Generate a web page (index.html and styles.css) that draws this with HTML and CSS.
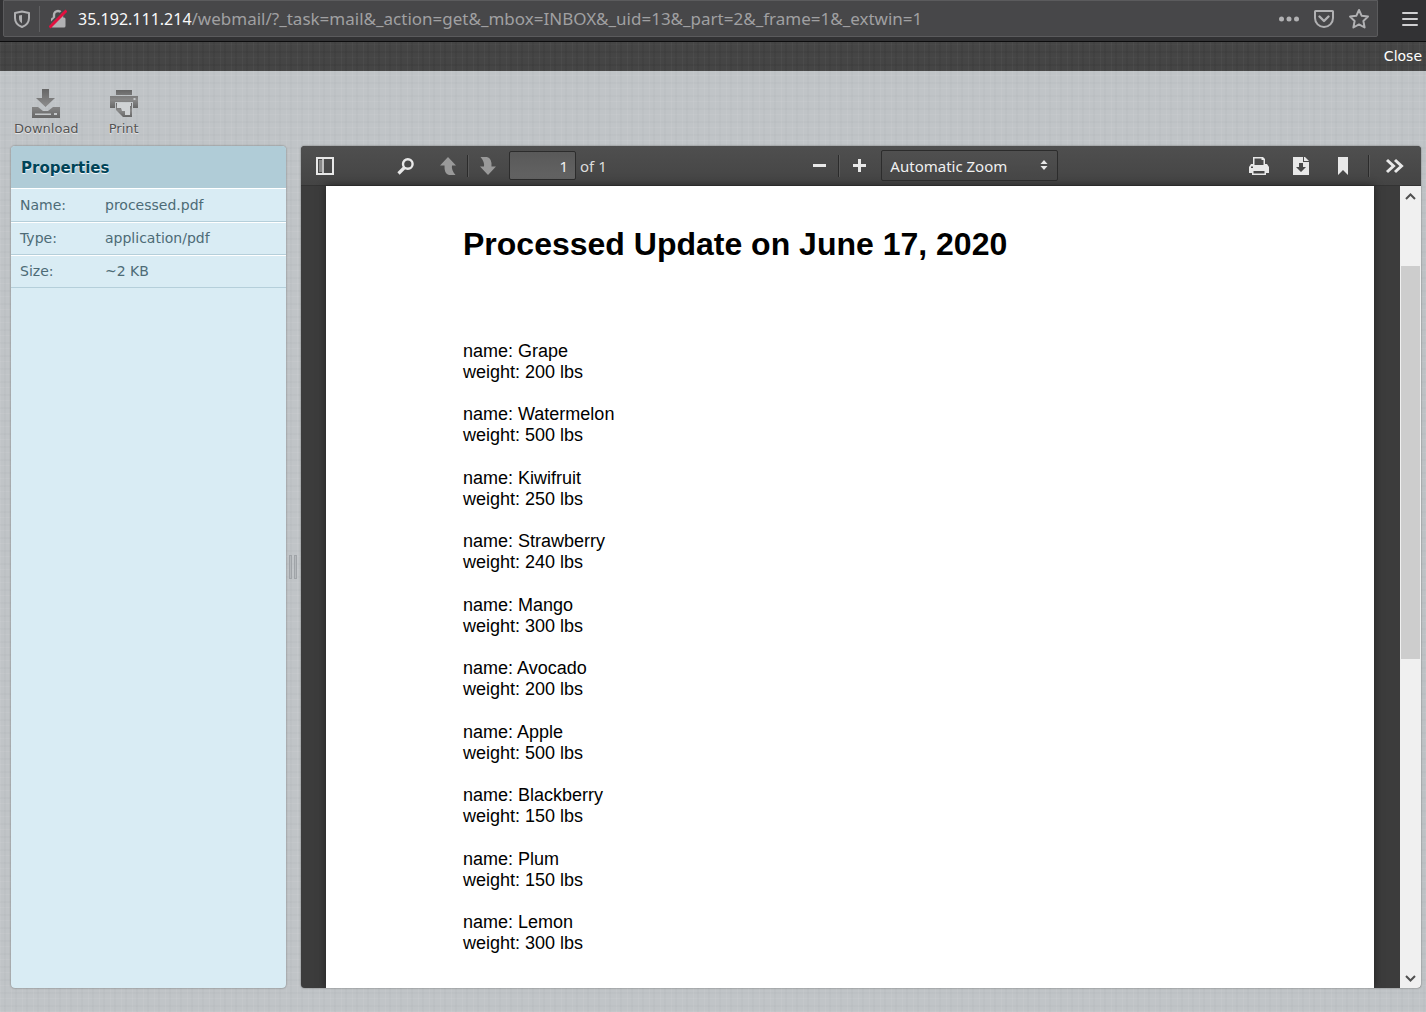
FILE: index.html
```
<!DOCTYPE html>
<html lang="en">
<head>
<meta charset="utf-8">
<title>processed.pdf</title>
<link rel="stylesheet" href="styles.css">
</head>
<body>
<header class="browser">
  <div class="address">
    <button class="chrome-btn" aria-label="Tracking protection"><svg width="18" height="18" viewBox="0 0 18 18" fill="none" stroke="#b1b1b3" stroke-width="2"><path d="M9 1.500 16 3v5c0 4-3 7.500-7 9C5 15.500 2 12 2 8V3z" stroke-linejoin="round"/><path d="M9 5v8.500C7 12 6 10.500 6 8V5.600z" fill="#b1b1b3" stroke="none"/></svg></button>
    <span class="address-rule"></span>
    <button class="chrome-btn lock" aria-label="Connection is not secure"><svg width="18" height="20" viewBox="0 0 18 20"><path d="M5 9V6a4 4 0 0 1 8 0v3" fill="none" stroke="#b1b1b3" stroke-width="2.400"/><rect x="2" y="8.500" width="14.500" height="10" rx="1.500" fill="#b1b1b3"/><path d="M-1 17 16 0" stroke="#474749" stroke-width="2"/><path d="M.5 18.500 17.500 1.500" stroke="#e2103f" stroke-width="3"/></svg></button>
    <label class="host" for="url">35.192.111.214</label>
    <input class="path" id="url" type="text" value="/webmail/?_task=mail&amp;_action=get&amp;_mbox=INBOX&amp;_uid=13&amp;_part=2&amp;_frame=1&amp;_extwin=1">
    <div class="address-actions">
      <button class="chrome-btn" aria-label="Page actions"><svg width="22" height="22" viewBox="0 0 22 22" fill="#b1b1b3"><circle cx="3.500" cy="11" r="2.500"/><circle cx="11" cy="11" r="2.500"/><circle cx="18.500" cy="11" r="2.500"/></svg></button>
      <button class="chrome-btn" aria-label="Save to Pocket"><svg width="22" height="22" viewBox="0 0 22 22" fill="none" stroke="#b1b1b3" stroke-width="2" stroke-linecap="round" stroke-linejoin="round"><path d="M2.500 3h17q.500 0 .500.500V10a9 9 0 0 1-18 0V3.500q0-.500.500-.500z"/><path d="m6.500 8.500 4.500 4.500 4.500-4.500" stroke-width="2.400"/></svg></button>
      <button class="chrome-btn" aria-label="Bookmark this page"><svg width="22" height="22" viewBox="0 0 22 22" fill="none" stroke="#b1b1b3" stroke-width="2" stroke-linejoin="round"><path d="m11 2 2.700 5.800 6.300.800-4.600 4.400 1.200 6.500L11 16.400l-5.600 3.100L6.600 13 2 8.600l6.300-.8z"/></svg></button>
    </div>
  </div>
  <button class="chrome-btn menu" aria-label="Open menu"><svg width="16" height="18" viewBox="0 0 16 18" stroke="#d0d0d2" stroke-width="2" stroke-linecap="round"><path d="M1 3h14M1 9h14M1 15h14"/></svg></button>
</header>
<nav class="topline"><a href="#">Close</a></nav>
<div class="taskbar">
  <a class="task" href="#"><svg width="30" height="30" viewBox="0 0 30 30"><defs><linearGradient id="grey" x2="0" y2="1"><stop offset="0" stop-color="#666"/><stop offset=".55" stop-color="#898989"/><stop offset="1" stop-color="#666"/></linearGradient></defs><path d="M11 0h7v9h6l-9.500 9L5 9h6zM1 18h6l5 4h5l5-4h7v11H1z" fill="url(#grey)"/><path d="M4 24.500h16v1.500H4zM23 24h3v2h-3z" fill="#c4c7c9"/></svg>Download</a>
  <a class="task" href="#"><svg width="30" height="30" viewBox="0 0 30 30" fill="url(#grey)"><path d="M7 1h16v5H7zM1 7h28v12h-5v-6H6v6H1z"/><path d="M7 14h16v14h-9l-7-7z"/><path d="M8 13.500h14V17h-1v9h-5v-4h-3l-1-3H8z" fill="#d0d3d5"/><path d="M24.500 9h2v2h-2z" fill="#c4c7c9"/></svg>Print</a>
</div>
<main class="workspace">
  <section class="properties">
    <h2>Properties</h2>
    <table>
      <tr><th scope="row">Name:</th><td>processed.pdf</td></tr>
      <tr><th scope="row">Type:</th><td>application/pdf</td></tr>
      <tr><th scope="row">Size:</th><td>~2 KB</td></tr>
    </table>
  </section>
  <div class="splitter"><span></span><span></span></div>
  <section class="viewer">
    <div class="viewer-bar">
      <div class="bar-group bar-left">
        <button class="tool" aria-label="Toggle sidebar"><svg width="18" height="18" viewBox="0 0 18 18"><path d="M1 1h16v16H1z" fill="none" stroke="#e8e8e8" stroke-width="2"/><path d="M3 3h3v12H3z" fill="#888"/><path d="M7 2v14" stroke="#e8e8e8" stroke-width="1.500"/></svg></button>
        <button class="tool find" aria-label="Find"><svg width="18" height="18" viewBox="0 0 18 18" fill="none" stroke="#e8e8e8"><circle cx="10.800" cy="7" r="4.800" stroke-width="2.400"/><path d="m7.500 10.500-6 6" stroke-width="3.200"/></svg></button>
        <div class="paging">
          <button class="tool" aria-label="Previous page" disabled><svg width="18" height="20" viewBox="0 0 18 20" fill="#999"><path d="M9 1 17 9.500h-4c-.500 3 .500 6 3.500 9.500H10q-5-1-4.500-9.500H1z"/></svg></button>
          <span class="bar-rule"></span>
          <button class="tool" aria-label="Next page" disabled><svg width="18" height="20" viewBox="0 0 18 20" fill="#999"><path d="M9 19 1 10.500h4c.500-3-.500-6-3.500-9.500H8q5 1 4.500 9.500H17z"/></svg></button>
        </div>
        <input class="page-number" id="page" type="text" value="1"><label class="page-count" for="page">of 1</label>
      </div>
      <div class="bar-group bar-middle">
        <button class="tool" aria-label="Zoom out"><svg width="14" height="14" viewBox="0 0 14 14" stroke="#e8e8e8" stroke-width="3"><path d="M1 6.500h13"/></svg></button>
        <span class="bar-rule"></span>
        <button class="tool" aria-label="Zoom in"><svg width="14" height="14" viewBox="0 0 14 14" stroke="#e8e8e8" stroke-width="3"><path d="M1 6.500h13M7.500 0v13"/></svg></button>
        <div class="zoom">
          <select aria-label="Zoom"><option>Automatic Zoom</option></select>
          <svg class="zoom-arrows" width="8" height="12" viewBox="0 0 8 12" fill="#e8e8e8"><path d="M4 1 7.500 5h-7zM4 11 .5 7h7z"/></svg>
        </div>
      </div>
      <div class="bar-group bar-right">
        <button class="tool" aria-label="Print"><svg width="22" height="20" viewBox="0 0 22 20" fill="#e8e8e8"><path fill-rule="evenodd" d="M5 1h10l2 2v5h2l2 3v6h-3v2H4v-2H1v-6l2-3h2zm1.500 1.500V9h9V4h-2V2.500zM5.500 15v2.500h11V15zM3 10.500V12h2v-1.500z"/></svg></button>
        <button class="tool" aria-label="Download"><svg width="18" height="20" viewBox="0 0 18 20" fill="#e8e8e8"><path fill-rule="evenodd" d="M1 1h10v5h6v13H1zm6 6v4H4l5 5 5-5h-3V7z"/><path d="M12 1h1l4 4h-5z"/></svg></button>
        <button class="tool" aria-label="Bookmark"><svg width="18" height="20" viewBox="0 0 18 20" fill="#e8e8e8"><path d="M4 1h10v18l-5-5-5 5z"/></svg></button>
        <span class="bar-rule"></span>
        <button class="tool" aria-label="Tools"><svg width="20" height="16" viewBox="0 0 20 16" fill="none" stroke="#e8e8e8" stroke-width="3"><path d="m2 2 6.500 6L2 14M10 2l6.500 6-6.500 6"/></svg></button>
      </div>
    </div>
    <div class="viewer-body">
      <article class="sheet">
        <h1>Processed Update on June 17, 2020</h1>
        <div class="entries">
          <p>name: Grape<br>weight: 200 lbs</p>
          <p>name: Watermelon<br>weight: 500 lbs</p>
          <p>name: Kiwifruit<br>weight: 250 lbs</p>
          <p>name: Strawberry<br>weight: 240 lbs</p>
          <p>name: Mango<br>weight: 300 lbs</p>
          <p>name: Avocado<br>weight: 200 lbs</p>
          <p>name: Apple<br>weight: 500 lbs</p>
          <p>name: Blackberry<br>weight: 150 lbs</p>
          <p>name: Plum<br>weight: 150 lbs</p>
          <p>name: Lemon<br>weight: 300 lbs</p>
        </div>
      </article>
      <div class="scrollbar">
        <svg width="21" height="20" viewBox="0 0 21 20" fill="none" stroke="#505050" stroke-width="2"><path d="m6 13 4.500-4.500L15 13"/></svg>
        <div class="track"><div class="thumb"></div></div>
        <svg width="21" height="20" viewBox="0 0 21 20" fill="none" stroke="#505050" stroke-width="2"><path d="m6 8 4.500 4.500L15 8"/></svg>
      </div>
    </div>
  </section>
</main>
</body>
</html>
```
FILE: styles.css
```
* { box-sizing: border-box; }

body {
  margin: 0;
  height: 100vh;
  display: flex;
  flex-direction: column;
  overflow: hidden;
  font-family: "DejaVu Sans", Verdana, sans-serif;
  font-size: 13px;
  background-color: #c0c4c7;
  background-image:
    repeating-linear-gradient(90deg, rgba(255,255,255,.06) 0 1px, transparent 1px 4px, rgba(90,95,100,.03) 4px 6px, transparent 6px 11px),
    repeating-linear-gradient(0deg, rgba(255,255,255,.06) 0 1px, transparent 1px 5px, rgba(90,95,100,.03) 5px 7px, transparent 7px 13px);
}

button, input, select { font: inherit; color: inherit; }
button { padding: 0; border: 0; background: none; }

/* Browser chrome */
.browser {
  flex: none;
  display: flex;
  height: 42px;
  padding-left: 3px;
  background: #323234;
  border-bottom: 1px solid #0c0c0d;
  font-family: "Noto Sans", "Open Sans", sans-serif;
  font-size: 17px;
}
.address {
  flex: 1;
  display: flex;
  align-items: center;
  height: 37px;
  padding: 0 7px 0 9px;
  background: #474749;
  border: 1px solid #5b5b5d;
  border-radius: 0 0 2px 2px;
}
.chrome-btn { display: flex; align-items: center; justify-content: center; }
.address-rule { width: 1px; height: 26px; margin: 0 9px 0 8px; background: #5f5f61; }
.host { margin-left: 11px; color: #f9f9fa; font-size: 16px; line-height: 24px; }
.path {
  flex: 1;
  min-width: 0;
  height: 24px;
  padding: 0;
  border: 0;
  outline: 0;
  background: none;
  color: #a0a0a2;
}
.address-actions { display: flex; gap: 13px; }
.menu { width: 48px; height: 37px; padding-left: 16px; }

/* Webmail header */
.topline {
  flex: none;
  display: flex;
  justify-content: flex-end;
  height: 29px;
  padding-right: 4px;
  background-color: #454545;
  background-image:
    repeating-linear-gradient(90deg, rgba(255,255,255,.03) 0 1px, transparent 1px 4px, rgba(0,0,0,.05) 4px 6px, transparent 6px 11px),
    repeating-linear-gradient(0deg, rgba(255,255,255,.02) 0 1px, transparent 1px 5px, rgba(0,0,0,.05) 5px 7px, transparent 7px 13px);
}
.topline a { color: #fff; font-size: 14px; line-height: 28px; text-decoration: none; }

.taskbar { flex: none; display: flex; gap: 25px; height: 75px; padding: 18px 14px 0; }
.task {
  display: flex;
  flex-direction: column;
  align-items: center;
  min-width: 40px;
  color: #555;
  line-height: 20px;
  text-decoration: none;
  text-shadow: 0 1px 1px #eee;
}

/* Workspace */
.workspace { flex: 1; min-height: 0; display: flex; padding: 0 5px 24px 11px; }
.properties {
  flex: none;
  width: 275px;
  overflow: hidden;
  background: #d9ecf4;
  border-radius: 4px;
  box-shadow: 0 0 2px #666;
  font-size: 14px;
}
.properties h2 {
  margin: 0;
  height: 43px;
  padding-left: 10px;
  border-bottom: 1px solid #fff;
  background: #b0ccd7;
  color: #004458;
  font-size: 15px;
  line-height: 44px;
  text-shadow: 0 1px 1px #fff;
}
.properties table { width: 100%; border-spacing: 0; color: #4d6b76; }
.properties th, .properties td {
  height: 33px;
  padding: 0 0 0 9px;
  border-bottom: 1px solid #b5cfda;
  box-shadow: 0 1px 0 #fff;
  font-weight: normal;
  text-align: left;
}
.properties tr:last-child > * { box-shadow: none; }
.properties th { width: 85px; }
.splitter { flex: none; width: 15px; padding-right: 1px; display: flex; align-items: center; justify-content: center; gap: 2px; }
.splitter span { width: 3px; height: 24px; border: 1px solid #a0a4a8; background: #b4b8bb; }

/* PDF viewer */
.viewer {
  flex: 1;
  min-width: 0;
  display: flex;
  flex-direction: column;
  overflow: hidden;
  border-radius: 4px;
  background: #3c3c3c;
  box-shadow: 0 0 2px #666;
}
.viewer-bar {
  flex: none;
  display: flex;
  justify-content: space-between;
  height: 40px;
  padding: 0 5px;
  background: linear-gradient(#4f4f4f, #444);
  border-bottom: 1px solid #333;
  color: #dcdcdc;
  font-family: "Noto Sans", "Open Sans", sans-serif;
  font-size: 15px;
}
.bar-group, .paging { display: flex; align-items: center; }
.tool { display: flex; align-items: center; justify-content: center; width: 38px; height: 32px; }
.find { margin-left: 43px; }
.paging { margin-left: 4px; }
.bar-rule { width: 2px; height: 22px; background: #2b2b2b; border-right: 1px solid #5a5a5a; }
.page-number {
  width: 67px;
  height: 29px;
  margin-left: 2px;
  padding: 0 7px;
  border: 1px solid #2c2c2c;
  border-radius: 2px;
  background: linear-gradient(#595959, #636363);
  color: #f2f2f2;
  text-align: right;
}
.page-count { margin-left: 4px; }
.bar-middle { margin-left: 14px; }
.zoom { position: relative; margin-left: 3px; }
.zoom select {
  display: block;
  width: 177px;
  height: 31px;
  padding: 0 8px;
  border: 1px solid #2c2c2c;
  border-radius: 2px;
  background: linear-gradient(#505050, #464646);
  color: #f0f0f0;
  appearance: none;
}
.zoom-arrows { position: absolute; right: 10px; top: 9px; pointer-events: none; }
.bar-right .tool { width: 42px; }
.bar-right .bar-rule { margin: 0 4px; }

.viewer-body { flex: 1; min-height: 0; display: flex; }
.sheet {
  flex: 1;
  margin: 0 26px 0 25px;
  padding: 40px 137px;
  background: #fff;
  box-shadow: 0 0 8px #222;
  color: #000;
  font-family: "Liberation Sans", Arial, sans-serif;
}
.sheet h1 { margin: 0 0 79px; font-size: 32px; line-height: 36px; }
.entries { display: flex; flex-direction: column; justify-content: space-between; height: 613px; font-size: 18px; line-height: 21px; }
.entries p { margin: 0; }

.scrollbar { flex: none; width: 21px; display: flex; flex-direction: column; background: #f0f0f0; }
.track { flex: 1; display: flex; flex-direction: column; padding: 60px 1px 0; }
.thumb { height: 56%; background: #cdcdcd; }
```
